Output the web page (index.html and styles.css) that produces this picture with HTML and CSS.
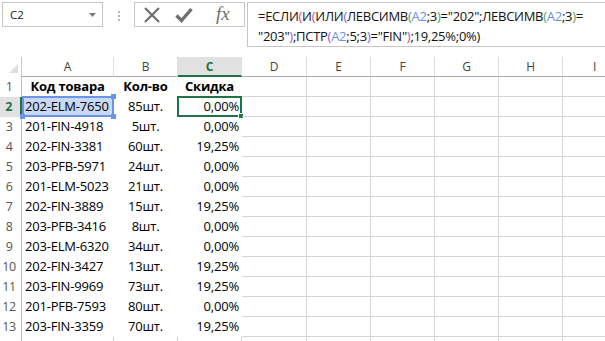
FILE: index.html
```html
<!DOCTYPE html>
<html lang="ru">

<head>
    <meta charset="UTF-8">
    <title>Скидка</title>
    <link rel="stylesheet" href="styles.css">
</head>

<body>

    <div class="toolbar">
        <div class="namebox">
            <span>C2</span>
            <svg class="dropdown" width="7" height="4" viewBox="0 0 7 4"><polygon points="0,0 7,0 3.5,4" fill="#7a7a7a"/></svg>
        </div>
        <div class="grip"><i></i><i></i><i></i></div>
        <div class="buttons">
            <svg width="18" height="18" viewBox="0 0 18 18"><path d="M2 2 L16 16 M16 2 L2 16" stroke="#6f6f6f" stroke-width="2.2" fill="none"/></svg>
            <svg class="ok" width="18" height="18" viewBox="0 0 18 18"><path d="M1.5 9.5 L6.5 14.5 L16.5 3" stroke="#6f6f6f" stroke-width="3.4" fill="none"/></svg>
            <span class="fx">fx</span>
        </div>
        <div class="formula">
            =ЕСЛИ<span class="p1">(</span>И<span class="p1">(</span>ИЛИ<span class="p2">(</span>ЛЕВСИМВ<span class="p3">(</span><span class="ref">A2</span>;3<span class="p3">)</span>="202";ЛЕВСИМВ<span class="p3">(</span><span class="ref">A2</span>;3<span class="p3">)</span>=<br>"203"<span class="p2">)</span>;ПСТР<span class="p2">(</span><span class="ref">A2</span>;5;3<span class="p2">)</span>="FIN"<span class="p1">)</span>;19,25%;0%)
        </div>
    </div>

    <div class="sheet">
        <div class="row head">
            <div class="rh corner"><svg width="9" height="9" viewBox="0 0 9 9"><polygon points="9,0 9,9 0,9" fill="#dfdfdf"/></svg></div>
            <div class="ch ca">A</div>
            <div class="ch cb">B</div>
            <div class="ch cc active">C</div>
            <div class="ch cd">D</div>
            <div class="ch">E</div>
            <div class="ch">F</div>
            <div class="ch">G</div>
            <div class="ch">H</div>
            <div class="ch">I</div>
        </div>

        <div class="row">
            <div class="rh">1</div>
            <div class="cell ca w bold center">Код товара</div>
            <div class="cell cb w bold center">Кол-во</div>
            <div class="cell cc w bold center">Скидка</div>
            <div class="cell cd"></div><div class="cell"></div><div class="cell"></div><div class="cell"></div><div class="cell"></div><div class="cell"></div>
        </div>
        <div class="row">
            <div class="rh active">2</div>
            <div class="cell ca w ref-cell">202-ELM-7650<span class="ref-box"><b class="h1"></b><b class="h2"></b><b class="h3"></b></span></div>
            <div class="cell cb w center">85шт.</div>
            <div class="cell cc w right current">0,00%<span class="cur-box"><b></b></span></div>
            <div class="cell cd"></div><div class="cell"></div><div class="cell"></div><div class="cell"></div><div class="cell"></div><div class="cell"></div>
        </div>
        <div class="row">
            <div class="rh">3</div>
            <div class="cell ca w">201-FIN-4918</div>
            <div class="cell cb w center">5шт.</div>
            <div class="cell cc w right">0,00%</div>
            <div class="cell cd"></div><div class="cell"></div><div class="cell"></div><div class="cell"></div><div class="cell"></div><div class="cell"></div>
        </div>
        <div class="row">
            <div class="rh">4</div>
            <div class="cell ca w">202-FIN-3381</div>
            <div class="cell cb w center">60шт.</div>
            <div class="cell cc w right">19,25%</div>
            <div class="cell cd"></div><div class="cell"></div><div class="cell"></div><div class="cell"></div><div class="cell"></div><div class="cell"></div>
        </div>
        <div class="row">
            <div class="rh">5</div>
            <div class="cell ca w">203-PFB-5971</div>
            <div class="cell cb w center">24шт.</div>
            <div class="cell cc w right">0,00%</div>
            <div class="cell cd"></div><div class="cell"></div><div class="cell"></div><div class="cell"></div><div class="cell"></div><div class="cell"></div>
        </div>
        <div class="row">
            <div class="rh">6</div>
            <div class="cell ca w">201-ELM-5023</div>
            <div class="cell cb w center">21шт.</div>
            <div class="cell cc w right">0,00%</div>
            <div class="cell cd"></div><div class="cell"></div><div class="cell"></div><div class="cell"></div><div class="cell"></div><div class="cell"></div>
        </div>
        <div class="row">
            <div class="rh">7</div>
            <div class="cell ca w">202-FIN-3889</div>
            <div class="cell cb w center">15шт.</div>
            <div class="cell cc w right">19,25%</div>
            <div class="cell cd"></div><div class="cell"></div><div class="cell"></div><div class="cell"></div><div class="cell"></div><div class="cell"></div>
        </div>
        <div class="row">
            <div class="rh">8</div>
            <div class="cell ca w">203-PFB-3416</div>
            <div class="cell cb w center">8шт.</div>
            <div class="cell cc w right">0,00%</div>
            <div class="cell cd"></div><div class="cell"></div><div class="cell"></div><div class="cell"></div><div class="cell"></div><div class="cell"></div>
        </div>
        <div class="row">
            <div class="rh">9</div>
            <div class="cell ca w">203-ELM-6320</div>
            <div class="cell cb w center">34шт.</div>
            <div class="cell cc w right">0,00%</div>
            <div class="cell cd"></div><div class="cell"></div><div class="cell"></div><div class="cell"></div><div class="cell"></div><div class="cell"></div>
        </div>
        <div class="row">
            <div class="rh">10</div>
            <div class="cell ca w">202-FIN-3427</div>
            <div class="cell cb w center">13шт.</div>
            <div class="cell cc w right">19,25%</div>
            <div class="cell cd"></div><div class="cell"></div><div class="cell"></div><div class="cell"></div><div class="cell"></div><div class="cell"></div>
        </div>
        <div class="row">
            <div class="rh">11</div>
            <div class="cell ca w">203-FIN-9969</div>
            <div class="cell cb w center">73шт.</div>
            <div class="cell cc w right">19,25%</div>
            <div class="cell cd"></div><div class="cell"></div><div class="cell"></div><div class="cell"></div><div class="cell"></div><div class="cell"></div>
        </div>
        <div class="row">
            <div class="rh">12</div>
            <div class="cell ca w">201-PFB-7593</div>
            <div class="cell cb w center">80шт.</div>
            <div class="cell cc w right">0,00%</div>
            <div class="cell cd"></div><div class="cell"></div><div class="cell"></div><div class="cell"></div><div class="cell"></div><div class="cell"></div>
        </div>
        <div class="row">
            <div class="rh">13</div>
            <div class="cell ca w">203-FIN-3359</div>
            <div class="cell cb w center">70шт.</div>
            <div class="cell cc w right">19,25%</div>
            <div class="cell cd"></div><div class="cell"></div><div class="cell"></div><div class="cell"></div><div class="cell"></div><div class="cell"></div>
        </div>
        <div class="row">
            <div class="rh"></div>
            <div class="cell ca"></div>
            <div class="cell cb"></div>
            <div class="cell cc"></div>
            <div class="cell cd"></div><div class="cell"></div><div class="cell"></div><div class="cell"></div><div class="cell"></div><div class="cell"></div>
        </div>
    </div>

</body>

</html>
```

FILE: styles.css
```css
* {
    margin: 0px;
    box-sizing: border-box;
}

body {
    font-family: 'Open Sans', sans-serif;
    background-color: white;
    color: #000;
    width: 605px;
    height: 341px;
    overflow: hidden;
}

/* top bar: name box, buttons, formula */

.toolbar {
    display: flex;
    align-items: flex-start;
    padding: 2px 0 0 2px;
    height: 57px;
}

.toolbar > * {
    flex: none;
}

.namebox {
    width: 101px;
    height: 25px;
    border: 1px solid #c6c6c6;
    display: flex;
    align-items: center;
    justify-content: space-between;
    padding: 0 6px 0 7px;
    font-size: 11.5px;
    color: #222;
}

.grip {
    display: flex;
    flex-direction: column;
    gap: 2px;
    margin: 9px 14px 0 15px;
}

.grip i {
    display: block;
    width: 2px;
    height: 2px;
    background: #b5b5b5;
}

.buttons {
    width: 111px;
    height: 25px;
    border: 1px solid #c6c6c6;
    display: flex;
    align-items: center;
    padding: 0 0 0 8px;
}

.buttons .ok {
    margin-left: 14px;
}

.fx {
    margin-left: 23px;
    font-family: 'Liberation Serif', serif;
    font-style: italic;
    font-size: 19px;
    color: #6f6f6f;
    line-height: 1;
    margin-top: -2px;
}

.formula {
    margin-left: 2px;
    width: 380px;
    height: 45px;
    border: 1px solid #c6c6c6;
    padding: 3px 0 0 10px;
    font-size: 13px;
    line-height: 20px;
    letter-spacing: -0.27px;
    color: #111;
    white-space: nowrap;
}

.p1 {
    color: #e8417e;
}

.p2 {
    color: #9b59c9;
}

.p3 {
    color: #4fa34f;
}

.ref {
    color: #6b8fe0;
}

/* sheet */

.row {
    display: flex;
    height: 20px;
    font-size: 13px;
    letter-spacing: -0.2px;
    line-height: 19px;
}

.rh {
    width: 22px;
    flex: none;
    border-right: 1px solid #bcbcbc;
    text-align: center;
    padding-right: 3px;
    color: #555;
    font-size: 12.5px;
    letter-spacing: -0.5px;
}

.rh.active {
    background: #e1e1e1;
    color: #217346;
    font-weight: bold;
    border-right: 2px solid #217346;
}

.corner {
    display: flex;
    align-items: flex-end;
    justify-content: flex-end;
    padding: 0 3px 4px 0;
    border-right: 1px solid #c8c8c8;
}

.head .ch {
    width: 64px;
    flex: none;
    text-align: center;
    color: #444;
    font-size: 12px;
    border-right: 1px solid #e0e0e0;
    border-bottom: 1px solid #a8a8a8;
}

.head .ch.active {
    background: #e1e1e1;
    color: #217346;
    font-weight: bold;
    border-bottom: 2px solid #217346;
}

.cell {
    width: 64px;
    flex: none;
    border-right: 1px solid #d4d4d4;
    border-bottom: 1px solid #d4d4d4;
    padding: 0 3px;
    white-space: nowrap;
    position: relative;
}

.ca {
    width: 92px !important;
}

.cd {
    width: 65px !important;
}

.w {
    border-color: transparent;
}

.bold {
    font-weight: bold;
}

.center {
    text-align: center;
}

.right {
    text-align: right;
    padding-right: 2px;
}

/* selection boxes */

.ref-cell {
    background: #c9d9f3;
}

.ref-box {
    position: absolute;
    left: 0;
    top: -1px;
    right: -1px;
    bottom: -1px;
    border: 2px solid #6b93e6;
}

.ref-box b {
    position: absolute;
    width: 5px;
    height: 5px;
    background: #6b93e6;
}

.ref-box .h1 {
    right: -4px;
    top: -4px;
}

.ref-box .h2 {
    right: -4px;
    bottom: -4px;
}

.ref-box .h3 {
    left: -4px;
    bottom: -4px;
}

.cur-box {
    position: absolute;
    left: -1px;
    top: -1px;
    right: -1px;
    bottom: -1px;
    border: 2px solid #217346;
}

.cur-box b {
    position: absolute;
    right: -4px;
    bottom: -4px;
    width: 6px;
    height: 6px;
    background: #217346;
    border: 1px solid white;
}
```
